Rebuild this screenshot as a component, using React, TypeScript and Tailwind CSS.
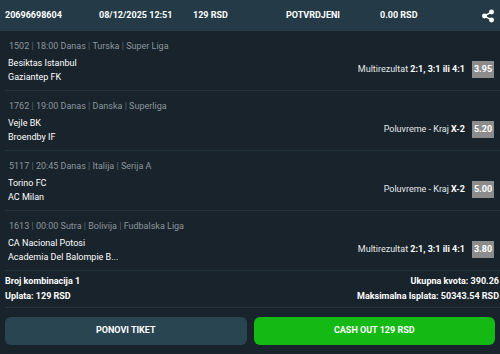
import { Share2 } from "lucide-react";

type Match = {
  code: string;
  time: string;
  country: string;
  league: string;
  home: string;
  away: string;
  market: string;
  pick: string;
  odd: string;
};

const matches: Match[] = [
  { code: "1502", time: "18:00 Danas", country: "Turska", league: "Super Liga", home: "Besiktas Istanbul", away: "Gaziantep FK", market: "Multirezultat", pick: "2:1, 3:1 ili 4:1", odd: "3.95" },
  { code: "1762", time: "19:00 Danas", country: "Danska", league: "Superliga", home: "Vejle BK", away: "Broendby IF", market: "Poluvreme - Kraj", pick: "X-2", odd: "5.20" },
  { code: "5117", time: "20:45 Danas", country: "Italija", league: "Serija A", home: "Torino FC", away: "AC Milan", market: "Poluvreme - Kraj", pick: "X-2", odd: "5.00" },
  { code: "1613", time: "00:00 Sutra", country: "Bolivija", league: "Fudbalska Liga", home: "CA Nacional Potosi", away: "Academia Del Balompie B...", market: "Multirezultat", pick: "2:1, 3:1 ili 4:1", odd: "3.80" },
];

function Sep() {
  return <span className="text-[#5d6a73]"> | </span>;
}

export default function App() {
  return (
    <div className="w-[500px] h-[354px] bg-[#18232b] text-white font-['Roboto',sans-serif] overflow-hidden">
      <div className="h-[31px] bg-[#243b47] flex items-center pl-[5px] text-[9px] font-bold">
        <div className="w-[94px]">20696698604</div>
        <div className="w-[94px]">08/12/2025 12:51</div>
        <div className="w-[93px]">129 RSD</div>
        <div className="w-[94px]">POTVRDJENI</div>
        <div className="w-[94px]">0.00 RSD</div>
        <Share2 className="ml-[7px] w-[14px] h-[14px]" fill="white" strokeWidth={2.5} />
      </div>
      <div className="pl-[5px]">
        {matches.map((m) => (
          <div key={m.code} className="h-[60px] border-b border-[#24343e] flex items-end pb-[6px]">
            <div className="flex-1 pl-[3px]">
              <div className="text-[9px] text-[#8d979e] leading-[14px] mb-[3px] pl-[1px]">
                {m.code}<Sep />{m.time}<Sep />{m.country}<Sep />{m.league}
              </div>
              <div className="text-[9px] leading-[14px]">{m.home}</div>
              <div className="text-[9px] leading-[14px]">{m.away}</div>
            </div>
            <div className="flex items-center self-center mt-[24px] pr-[6px]">
              <span className="text-[9px] text-[#e6e9eb]">
                {m.market} <span className="font-bold text-white">{m.pick}</span>
              </span>
              <span className="ml-[7px] w-[22px] h-[17px] bg-[#8c8c8c] flex items-center justify-center text-[9px] font-bold">
                {m.odd}
              </span>
            </div>
          </div>
        ))}
        <div className="h-[37px] border-b border-[#24343e] flex justify-between items-center text-[9px] font-bold leading-[15px] pr-[1px]">
          <div>
            <div>Broj kombinacija 1</div>
            <div>Uplata: 129 RSD</div>
          </div>
          <div className="text-right">
            <div>Ukupna kvota: 390.26</div>
            <div>Maksimalna Isplata: 50343.54 RSD</div>
          </div>
        </div>
      </div>
      <div className="flex gap-[7px] px-[5px] mt-[9px]">
        <button className="flex-1 h-[28px] rounded-[6px] bg-[#2a4552] text-[9px] font-bold">PONOVI TIKET</button>
        <button className="flex-1 h-[28px] rounded-[6px] bg-[#14b914] text-[9px] font-bold">CASH OUT 129 RSD</button>
      </div>
    </div>
  );
}
